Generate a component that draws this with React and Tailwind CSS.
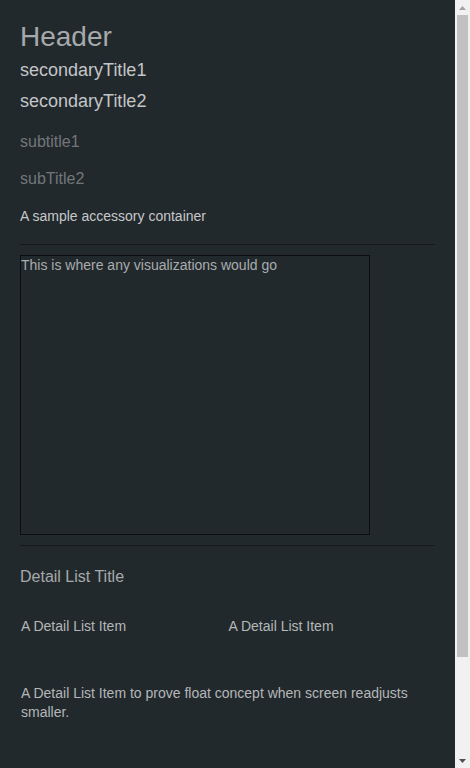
export default function App() {
  return (
    <div className="flex h-screen overflow-hidden bg-[#22292c] font-['Liberation_Sans',Arial,sans-serif]">
      <main className="min-w-0 flex-1 px-5 pt-[21px]">
        {/* Titles */}
        <h1 className="text-[28px] leading-[32px] text-[#a6a9ab]">Header</h1>
        <h2 className="mt-[7px] text-[18px] leading-[21px] text-[#c3c5c7]">secondaryTitle1</h2>
        <h2 className="mt-[10px] text-[18px] leading-[21px] text-[#c3c5c7]">secondaryTitle2</h2>
        <h3 className="mt-[21px] text-[16px] leading-[18px] text-[#72767a]">subtitle1</h3>
        <h3 className="mt-[19px] text-[16px] leading-[18px] text-[#72767a]">subTitle2</h3>
        <div className="mt-[20px] text-[14px] leading-[16px] text-[#c6c8ca]">A sample accessory container</div>

        <hr className="mt-5 border-0 border-t border-[#161a1c]" />

        {/* Visualization area */}
        <div className="mt-[10px] h-[280px] w-[350px] border border-[#0b0d0e]">
          <p className="text-[14px] leading-[18px] text-[#a9acae]">This is where any visualizations would go</p>
        </div>

        <hr className="mt-[10px] border-0 border-t border-[#161a1c]" />

        {/* Detail list */}
        <div className="mt-[22px] text-[16px] leading-[18px] text-[#a6a9ab]">Detail List Title</div>
        <div className="mt-[31px] grid grid-cols-2 text-[14px] leading-[19px] text-[#b4b7b9]">
          <div className="pl-px">A Detail List Item</div>
          <div className="pl-px">A Detail List Item</div>
        </div>
        <div className="mt-[48px] pl-px text-[14px] leading-[19px] text-[#b4b7b9]">
          A Detail List Item to prove float concept when screen readjusts smaller.
        </div>
      </main>

      {/* scrollbar */}
      <aside className="flex w-[15px] shrink-0 flex-col bg-[#f1f1f1]">
        <div className="flex h-[15px] items-center justify-center">
          <svg width="7" height="4" viewBox="0 0 7 4"><path d="M3.5 0L7 4H0z" fill="#a3a3a3" /></svg>
        </div>
        <div className="mx-[2px] h-[642px] bg-[#c1c1c1]" />
        <div className="flex-1" />
        <div className="flex h-[15px] items-center justify-center">
          <svg width="7" height="4" viewBox="0 0 7 4"><path d="M0 0H7L3.5 4z" fill="#505050" /></svg>
        </div>
      </aside>
    </div>
  );
}
